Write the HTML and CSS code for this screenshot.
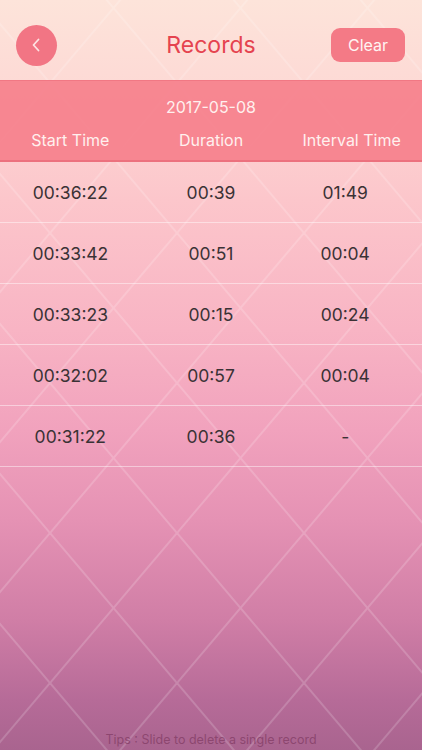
FILE: index.html
```html
<!DOCTYPE html>
<html>
<head>
<meta charset="utf-8">
<link rel="stylesheet" href="styles.css">
</head>
<body>
<div class="screen">
  <svg class="lattice" width="422" height="750" viewBox="0 0 422 750" aria-hidden="true">
    <defs>
      <pattern id="dia" patternUnits="userSpaceOnUse" x="50" y="83" width="127" height="150">
        <line x1="0" y1="0" x2="127" y2="150" stroke="#ffffff" stroke-width="2"/>
        <line x1="127" y1="0" x2="0" y2="150" stroke="#ffffff" stroke-width="2"/>
      </pattern>
    </defs>
    <rect width="422" height="750" fill="url(#dia)" opacity="0.17"/>
  </svg>

  <header class="nav">
    <button class="back" aria-label="Back">
      <svg width="10" height="14" viewBox="0 0 10 14"><path d="M7.5 1.5 L2.5 7 L7.5 12.5" fill="none" stroke="#fde3e3" stroke-width="1.8" stroke-linecap="round" stroke-linejoin="round"/></svg>
    </button>
    <h1 class="title">Records</h1>
    <button class="clear">Clear</button>
  </header>

  <section class="bar">
    <div class="date">2017-05-08</div>
    <div class="cols">
      <span>Start Time</span>
      <span>Duration</span>
      <span>Interval Time</span>
    </div>
  </section>

  <main class="rows">
    <div class="row"><span>00:36:22</span><span>00:39</span><span class="iv">01:49</span></div>
    <div class="row"><span>00:33:42</span><span>00:51</span><span class="iv">00:04</span></div>
    <div class="row"><span>00:33:23</span><span>00:15</span><span class="iv">00:24</span></div>
    <div class="row"><span>00:32:02</span><span>00:57</span><span class="iv">00:04</span></div>
    <div class="row"><span>00:31:22</span><span>00:36</span><span class="iv">-</span></div>
  </main>

  <footer class="tips">Tips : Slide to delete a single record</footer>
</div>
</body>
</html>
```

FILE: styles.css
```css
html, body {
  margin: 0;
  padding: 0;
}
body {
  width: 422px;
  height: 750px;
  overflow: hidden;
  font-family: Inter, Roboto, "Liberation Sans", sans-serif;
}
.screen {
  position: relative;
  width: 422px;
  height: 750px;
  display: flex;
  flex-direction: column;
  background: linear-gradient(180deg,
    #fde4da 0px,
    #fdd9d5 90px,
    #fcc6cb 200px,
    #f8b4c4 330px,
    #f1a2bd 430px,
    #e592b4 520px,
    #d07ea6 620px,
    #b66b98 700px,
    #a9648f 750px);
  overflow: hidden;
}
.lattice {
  position: absolute;
  left: 0;
  top: 0;
  pointer-events: none;
}
.nav {
  position: relative;
  height: 80px;
  display: flex;
  align-items: center;
  justify-content: space-between;
  padding: 10px 17px 0 16px;
  box-sizing: border-box;
}
.back {
  width: 41px;
  height: 41px;
  border-radius: 50%;
  border: none;
  background: #f27584;
  display: flex;
  align-items: center;
  justify-content: center;
  padding: 0;
  padding-right: 2px;
}
.title {
  position: absolute;
  left: 0;
  right: 0;
  top: 0;
  margin: 0;
  line-height: 90px;
  height: 80px;
  text-align: center;
  font-weight: 400;
  font-size: 23px;
  color: #e5434f;
  pointer-events: none;
}
.clear {
  width: 74px;
  height: 34px;
  border: none;
  border-radius: 9px;
  background: #f47a86;
  color: #fff4f2;
  font-family: inherit;
  font-size: 16px;
  padding: 0;
}
.bar {
  position: relative;
  height: 82px;
  box-sizing: border-box;
  background: rgba(246, 128, 140, 0.93);
  border-top: 1px solid rgba(236, 110, 124, 0.6);
  border-bottom: 2px solid #ec717e;
  color: #fff0ee;
  padding-top: 14px;
}
.date {
  text-align: center;
  font-size: 16px;
  line-height: 24px;
}
.cols {
  display: grid;
  grid-template-columns: 1fr 1fr 1fr;
  text-align: center;
  font-size: 16px;
  line-height: 24px;
  margin-top: 9px;
}
.rows {
  position: relative;
  display: flex;
  flex-direction: column;
}
.row {
  height: 61px;
  box-sizing: border-box;
  border-bottom: 1px solid rgba(255, 255, 255, 0.45);
  display: grid;
  grid-template-columns: 1fr 1fr 1fr;
  align-items: center;
  text-align: center;
  font-size: 17.5px;
  color: #3a3235;
}
.row .iv {
  padding-right: 13px;
}
.tips {
  position: relative;
  margin-top: auto;
  text-align: center;
  font-size: 12.5px;
  line-height: 16px;
  padding-bottom: 2px;
  color: rgba(125, 55, 95, 0.68);
}
```
